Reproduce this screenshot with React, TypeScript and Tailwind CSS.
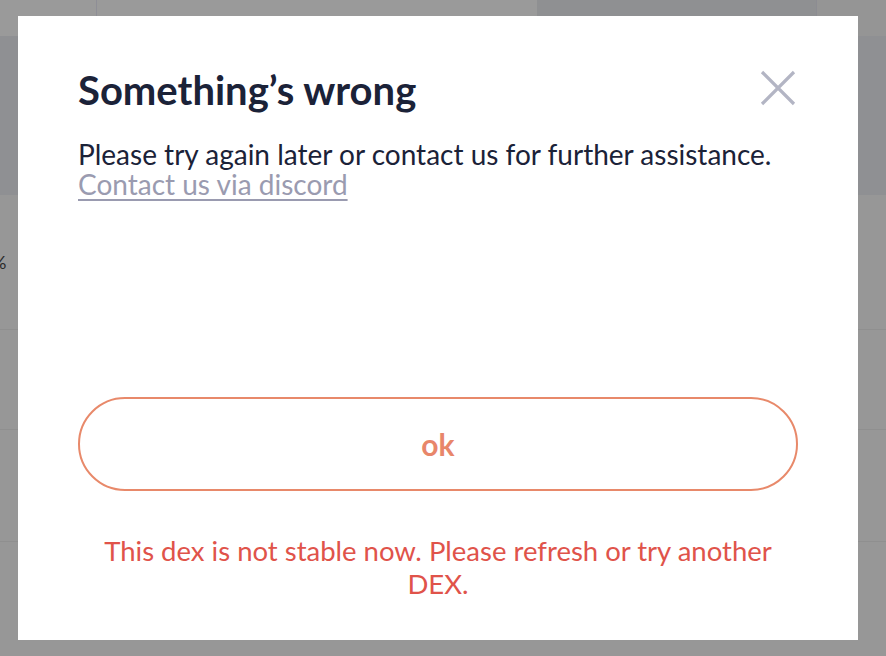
import React from "react";

export default function App() {
  return (
    <div
      className="relative w-[886px] h-[656px] overflow-hidden bg-[#979797]"
      style={{ fontFamily: "Lato, 'Open Sans', sans-serif" }}
    >
      {/* background page (dimmed) */}
      <div className="flex flex-col w-full h-full">
        <div className="flex h-[36px] bg-[#9a9a9a]">
          <div className="w-[97px] border-r border-[#8e8e96]" />
          <div className="w-[440px]" />
          <div className="w-[280px] bg-[#8f9092] border-r border-[#8c8c92]" />
          <div className="flex-1 bg-[#959595]" />
        </div>
        <div className="h-[159px] bg-[#8f9093]" />
        <div className="flex flex-col flex-1">
          <div className="h-[135px] border-b border-[#8f8f8f] flex items-center">
            <span className="-ml-[8px] text-[18px] text-[#2a2a2a]">%</span>
          </div>
          <div className="h-[100px] border-b border-[#8f8f8f]" />
          <div className="h-[112px] border-b border-[#8f8f8f]" />
          <div className="flex-1" />
        </div>
      </div>

      {/* modal */}
      <div className="absolute left-[18px] top-[16px] w-[840px] h-[624px] bg-white flex flex-col px-[60px] pt-[52px] pb-[40px]">
        <div className="flex items-center justify-between h-[44px]">
          <h2 className="text-[40px] leading-[44px] font-bold text-[#1b2238]">
            Something’s wrong
          </h2>
          <svg
            width="38"
            height="38"
            viewBox="0 0 38 38"
            className="mr-[1px] mt-[-4px]"
          >
            <path
              d="M3 3 L35 35 M35 3 L3 35"
              stroke="#b3b5c4"
              strokeWidth="3.2"
              strokeLinecap="butt"
            />
          </svg>
        </div>
        <div className="mt-[27px] text-[28px] leading-[30px] text-[#1b2238]">
          <p>Please try again later or contact us for further assistance.</p>
          <a className="block w-fit text-[#9a9bb0] underline decoration-[2px] underline-offset-[4px] cursor-pointer">
            Contact us via discord
          </a>
        </div>
        <div className="flex-1" />
        <button className="h-[94px] w-full rounded-full border-2 border-[#e8896a] text-[#e8866a] text-[30px] font-bold">
          ok
        </button>
        <p className="mt-[43px] text-center text-[27.5px] leading-[33px] text-[#e0534a] px-[10px]">
          This dex is not stable now. Please refresh or try another DEX.
        </p>
      </div>
    </div>
  );
}
